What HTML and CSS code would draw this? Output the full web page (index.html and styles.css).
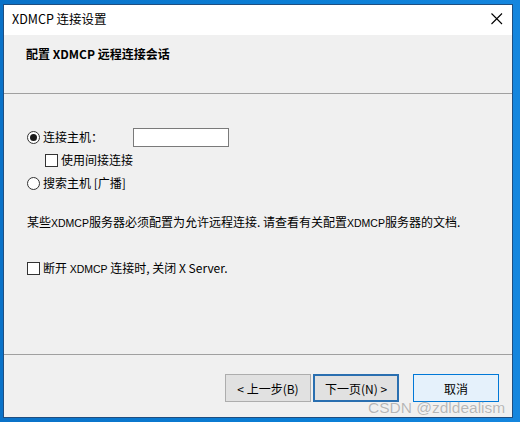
FILE: index.html
```html
<!DOCTYPE html>
<html>
<head>
<meta charset="utf-8">
<link rel="stylesheet" href="styles.css">
</head>
<body>
<div class="window">
  <div class="titlebar">
    <span class="title">XDMCP 连接设置</span>
    <svg class="close" width="12" height="12" viewBox="0 0 12 12"><path d="M0.5 0.5 L11 11 M11 0.5 L0.5 11" stroke="#000" stroke-width="1.1" fill="none"/></svg>
  </div>
  <div class="header">
    <span class="header-text">配置 XDMCP 远程连接会话</span>
  </div>
  <div class="content">
    <div class="row row1">
      <span class="radio checked"></span>
      <span class="label">连接主机：</span>
      <span class="input"></span>
    </div>
    <div class="row row2">
      <span class="checkbox"></span>
      <span class="label">使用间接连接</span>
    </div>
    <div class="row row3">
      <span class="radio"></span>
      <span class="label">搜索主机 [广播]</span>
    </div>
    <div class="row para">
      <span class="label">某些<span class="small">XDMCP</span>服务器必须配置为允许远程连接. 请查看有关配置<span class="small">XDMCP</span>服务器的文档.</span>
    </div>
    <div class="row row5">
      <span class="checkbox"></span>
      <span class="label">断开 <span class="small">XDMCP</span> 连接时, 关闭 X Server.</span>
    </div>
  </div>
  <div class="footer">
    <button class="btn">&lt; 上一步(B)</button>
    <button class="btn default">下一页(N) &gt;</button>
    <button class="btn cancel">取消</button>
  </div>
</div>
<div class="watermark">CSDN @zdldealism</div>
</body>
</html>
```
FILE: styles.css
```css
* { box-sizing: border-box; }
html, body {
  margin: 0;
  padding: 0;
  width: 520px;
  height: 422px;
  overflow: hidden;
}
body {
  background: linear-gradient(90deg, #0a72c8 0%, #0b7fd6 60%, #1586de 100%);
  font-family: "Noto Sans CJK SC", "Noto Sans", sans-serif;
  font-size: 12px;
  color: #000;
  position: relative;
}
.window {
  margin: 4px 0 0 3px;
  width: 510px;
  height: 414px;
  border: 1px solid #1f4e80;
  background: #f0f0f0;
  display: flex;
  flex-direction: column;
}
.titlebar {
  height: 30px;
  background: #fff;
  display: flex;
  align-items: center;
  justify-content: space-between;
  padding: 0 9px 0 8px;
  flex-shrink: 0;
}
.title {
  font-size: 12.5px;
  line-height: 1;
  margin-top: -1px;
}
.close { display: block; margin-top: -2px; }
.header {
  height: 59px;
  background: #f0f0f0;
  padding: 10px 0 0 22px;
  border-bottom: 1px solid #a0a0a0;
  flex-shrink: 0;
}
.header-text {
  font-weight: bold;
  font-size: 12px;
  line-height: 16px;
}
.content {
  height: 261px;
  border-bottom: 1px solid #a0a0a0;
  padding: 33px 0 0 23px;
  flex-shrink: 0;
}
.row {
  display: flex;
  align-items: center;
  height: 20px;
}
.label { line-height: 20px; white-space: nowrap; }
.small { font-family: "Liberation Sans", "Noto Sans", sans-serif; font-size: 10.5px; }
.row2 { margin-top: 3px; padding-left: 18px; }
.row3 { margin-top: 3px; }
.para { margin-top: 19px; }
.row5 { margin-top: 26px; }
.radio {
  width: 13px;
  height: 13px;
  border: 1px solid #333;
  border-radius: 50%;
  background: #fff;
  margin-right: 3px;
  position: relative;
  flex-shrink: 0;
}
.radio.checked::after {
  content: "";
  position: absolute;
  left: 2px;
  top: 2px;
  width: 7px;
  height: 7px;
  border-radius: 50%;
  background: #1a1a1a;
}
.checkbox {
  width: 13px;
  height: 13px;
  border: 1px solid #333;
  background: #fff;
  margin-right: 3px;
  flex-shrink: 0;
}
.input {
  width: 96px;
  height: 19px;
  border: 1px solid #7a7a7a;
  background: #fff;
  margin-left: 30px;
}
.footer {
  flex: 1;
  display: flex;
  justify-content: flex-end;
  align-items: flex-start;
  padding: 19px 13px 0 0;
}
.btn {
  height: 28px;
  width: 86px;
  font-family: "Noto Sans CJK SC", "Noto Sans", sans-serif;
  font-size: 12px;
  background: #e1e1e1;
  border: 1px solid #adadad;
  padding: 0;
  color: #000;
  margin: 0;
}
.btn.default {
  margin-left: 2px;
  border: 2px solid #2a6fb0;
}
.btn.cancel {
  margin-left: 14px;
  background: #e5f1fb;
  border: 1px solid #0078d7;
}
.watermark {
  position: absolute;
  left: 368px;
  top: 399px;
  font-family: "Liberation Sans", Arial, sans-serif;
  font-size: 15.5px;
  color: rgba(170, 170, 170, 0.85);
  text-shadow: 0 0 1px rgba(255, 255, 255, 0.9);
}
```
